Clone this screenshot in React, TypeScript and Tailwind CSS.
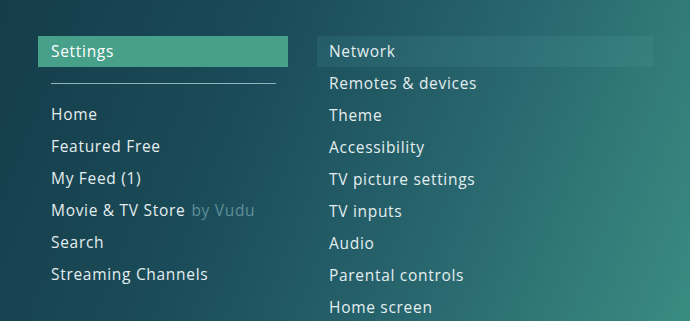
import React from "react";

const left = ["Home", "Featured Free", "My Feed (1)", "Movie & TV Store", "Search", "Streaming Channels"];
const right = [
  "Network",
  "Remotes & devices",
  "Theme",
  "Accessibility",
  "TV picture settings",
  "TV inputs",
  "Audio",
  "Parental controls",
  "Home screen",
];

export default function App() {
  return (
    <div
      className="w-[690px] h-[321px] overflow-hidden bg-[linear-gradient(112deg,#153c49_0%,#1b4c59_35%,#28666e_65%,#3a8c81_100%)] text-[#e4eef0] text-[15.5px] tracking-[0.7px]"
      style={{ fontFamily: '"Open Sans", "Liberation Sans", sans-serif' }}
    >
      <div className="flex pt-[36px] pl-[38px] gap-[29px]">
        <div className="w-[250px] flex flex-col">
          <div className="h-[31px] bg-[#47a08a] flex items-center pl-[13px] text-white">Settings</div>
          <div className="h-[32px] flex items-center pl-[13px] pr-[12px]">
            <div className="h-[1px] w-full bg-[#8fb4b8] mt-[1px]" />
          </div>
          {left.map((t) => (
            <div key={t} className="h-[32px] flex items-center pl-[13px]">
              {t}
              {t === "Movie & TV Store" && <span className="ml-[6px] text-[#5f8f98]">by Vudu</span>}
            </div>
          ))}
        </div>
        <div className="w-[336px] flex flex-col">
          {right.map((t, i) => (
            <div
              key={t}
              className={`flex items-center pl-[12px] ${i === 0 ? "h-[31px] bg-[#6fc0c01a] mb-[1px]" : "h-[32px]"}`}
            >
              {t}
            </div>
          ))}
        </div>
      </div>
    </div>
  );
}
